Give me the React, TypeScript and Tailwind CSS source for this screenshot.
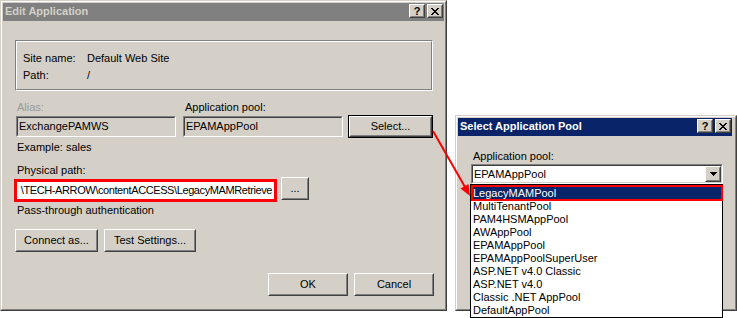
import React from "react";

const FONT = "font-['Liberation_Sans',Arial,sans-serif] text-[11px] leading-[13px]";

function Win({ className = "", children }: { className?: string; children: React.ReactNode }) {
  return (
    <div className={`border border-t-[#d4d0c8] border-l-[#d4d0c8] border-r-[#404040] border-b-[#404040] ${className}`}>
      <div className="w-full h-full border border-t-white border-l-white border-r-[#808080] border-b-[#808080] bg-[#d4d0c8] p-[1px] flex flex-col">
        {children}
      </div>
    </div>
  );
}

function Raised({ className = "", children }: { className?: string; children?: React.ReactNode }) {
  return (
    <div className={`border border-t-white border-l-white border-r-[#404040] border-b-[#404040] bg-[#d4d0c8] ${className}`}>
      <div className="w-full h-full border border-t-[#d4d0c8] border-l-[#d4d0c8] border-r-[#808080] border-b-[#808080] flex items-center justify-center">
        {children}
      </div>
    </div>
  );
}

function Sunken({ className = "", innerClass = "", children }: { className?: string; innerClass?: string; children?: React.ReactNode }) {
  return (
    <div className={`border border-t-[#808080] border-l-[#808080] border-r-white border-b-white ${className}`}>
      <div className={`w-full h-full border border-t-[#404040] border-l-[#404040] border-r-[#d4d0c8] border-b-[#d4d0c8] ${innerClass}`}>
        {children}
      </div>
    </div>
  );
}

function CloseGlyph() {
  return (
    <svg width="8" height="7" viewBox="0 0 8 7" shapeRendering="crispEdges">
      <path d="M0 0h2v1h1v1h2v-1h1v-1h2v1h-1v1h-1v1h-1v1h1v1h1v1h1v1h-2v-1h-1v-1h-2v1h-1v1h-2v-1h1v-1h1v-1h1v-1h-1v-1h-1v-1h-1z" fill="#000" />
    </svg>
  );
}

function TitleButtons() {
  return (
    <div className="flex gap-[2px] mt-[1px]">
      <Raised className="w-[16px] h-[14px]">
        <span className="font-bold text-[11px] leading-[11px] text-black">?</span>
      </Raised>
      <Raised className="w-[16px] h-[14px]">
        <CloseGlyph />
      </Raised>
    </div>
  );
}

function Button({ className = "", children, def = false }: { className?: string; children: React.ReactNode; def?: boolean }) {
  if (def) {
    return (
      <div className={`border border-black ${className}`}>
        <Raised className="w-full h-full">{children}</Raised>
      </div>
    );
  }
  return <Raised className={className}>{children}</Raised>;
}

const pools = [
  "LegacyMAMPool",
  "MultiTenantPool",
  "PAM4HSMAppPool",
  "AWAppPool",
  "EPAMAppPool",
  "EPAMAppPoolSuperUser",
  "ASP.NET v4.0 Classic",
  "ASP.NET v4.0",
  "Classic .NET AppPool",
  "DefaultAppPool",
];

export default function App() {
  return (
    <div className={`relative w-[737px] h-[318px] bg-white overflow-hidden flex items-start text-black ${FONT}`}>
      {/* Edit Application dialog */}
      <Win className="w-[447px] h-[311px] shrink-0">
        <div className="h-[18px] bg-[#808080] flex items-start pl-[2px] pr-[1px]">
          <span className="flex-1 font-bold text-[#d4d0c8] mt-[2px]">Edit Application</span>
          <TitleButtons />
        </div>

        {/* group box */}
        <div className="ml-[12px] mt-[19px] w-[418px] h-[51px] border border-t-[#808080] border-l-[#808080] border-r-white border-b-white">
          <div className="h-full border border-t-white border-l-white border-r-[#808080] border-b-[#808080] pl-[6px] pt-[10px] flex flex-col gap-[4px]">
            <div className="flex">
              <span className="w-[64px]">Site name:</span>
              <span>Default Web Site</span>
            </div>
            <div className="flex">
              <span className="w-[64px]">Path:</span>
              <span>/</span>
            </div>
          </div>
        </div>

        {/* alias / app pool */}
        <div className="mt-[10px] flex items-end">
          <div className="ml-[13px] w-[160px] flex flex-col">
            <span className="pl-[1px] text-[#9a9a9a]">Alias:</span>
            <Sunken className="mt-[2px] h-[21px] bg-[#d4d0c8]" innerClass="flex items-center pl-[1px]">
              <span>ExchangePAMWS</span>
            </Sunken>
          </div>
          <div className="ml-[7px] w-[160px] flex flex-col">
            <span className="pl-[2px]">Application pool:</span>
            <Sunken className="mt-[2px] h-[21px] bg-[#d4d0c8]" innerClass="flex items-center pl-[1px]">
              <span>EPAMAppPool</span>
            </Sunken>
          </div>
          <Button def className="ml-[5px] w-[85px] h-[23px] mb-[-1px]">
            Select...
          </Button>
        </div>

        <span className="ml-[14px] mt-[4px]">Example: sales</span>
        <span className="ml-[14px] mt-[10px]">Physical path:</span>

        <div className="flex items-start">
          <div className="ml-[11px] mt-[2px] w-[263px] h-[23px] border-[3px] border-[#ff0000] bg-white flex items-center justify-end overflow-hidden pr-[2px]">
            <span className="whitespace-nowrap tracking-[-0.4px]">\TECH-ARROW\contentACCESS\LegacyMAMRetrieve</span>
          </div>
          <Button className="ml-[4px] w-[28px] h-[23px]">...</Button>
        </div>

        <span className="ml-[14px] mt-[2px]">Pass-through authentication</span>

        <div className="mt-[12px] ml-[12px] flex gap-[6px]">
          <Button className="w-[83px] h-[23px]">Connect as...</Button>
          <Button className="w-[92px] h-[23px]">Test Settings...</Button>
        </div>

        <div className="mt-[21px] mr-[10px] flex justify-end gap-[6px]">
          <Button className="w-[80px] h-[23px]">OK</Button>
          <Button className="w-[80px] h-[23px]">Cancel</Button>
        </div>
      </Win>

      {/* Select Application Pool dialog */}
      <div className="relative ml-[8px] mt-[115px] shrink-0">
        <Win className="w-[282px] h-[196px]">
          <div className="h-[18px] mr-[2px] bg-[#0a246a] flex items-start pl-[2px] pr-[1px]">
            <span className="flex-1 font-bold text-white mt-[2px]">Select Application Pool</span>
            <TitleButtons />
          </div>
          <span className="ml-[15px] mt-[14px]">Application pool:</span>
          <Sunken className="ml-[13px] mt-[1px] w-[252px] h-[20px] bg-white" innerClass="flex items-center">
            <span className="flex-1 pl-[1px]">EPAMAppPool</span>
            <Raised className="w-[16px] h-[16px]">
              <svg width="7" height="4" viewBox="0 0 7 4" shapeRendering="crispEdges">
                <path d="M0 0h7v1h-1v1h-1v1h-1v1h-1v-1h-1v-1h-1v-1h-1z" fill="#000" />
              </svg>
            </Raised>
          </Sunken>
        </Win>

        {/* dropdown list */}
        <div className="absolute left-[15px] top-[69px] w-[253px] h-[134px] border border-black bg-white pt-[2px] flex flex-col">
          {pools.map((p, i) => (
            <div
              key={p}
              className={`h-[13px] pl-[2px] whitespace-nowrap ${i === 0 ? "bg-[#0a246a] text-white" : ""}`}
            >
              {p}
            </div>
          ))}
        </div>
        <div className="absolute left-[16px] top-[70px] w-[252px] h-[16px] border-2 border-[#ff0000]" />
      </div>

      {/* red annotation arrow */}
      <svg className="absolute left-0 top-0 pointer-events-none" width="737" height="318" viewBox="0 0 737 318">
        <line x1="433" y1="131" x2="465" y2="187" stroke="#ff0000" strokeWidth="2" />
        <polygon points="470,196 460.5,188.5 468.5,184" fill="#ff0000" />
      </svg>
    </div>
  );
}
